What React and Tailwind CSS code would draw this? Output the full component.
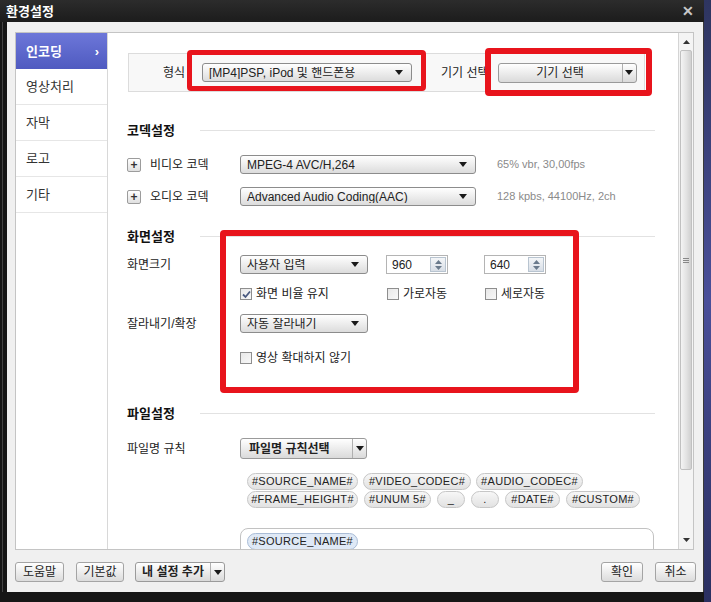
import { useState } from 'react'

const FONT = "font-['Liberation_Sans','Noto_Sans_CJK_KR',sans-serif]"

function Arrow() {
  return (
    <svg width="8" height="5" viewBox="0 0 8 5" className="flex-shrink-0">
      <path d="M0 0 H8 L4 5 Z" fill="#1a1a1a" />
    </svg>
  )
}

function Select({ w, children }) {
  return (
    <div
      className={`${w} h-[19px] flex items-center justify-between border border-[#8c8c8c] rounded-[3px] bg-gradient-to-b from-white to-[#dcdcdc] pl-[6px] pr-[8px] text-[12px] leading-none text-[#222]`}
    >
      <span className="truncate">{children}</span>
      <Arrow />
    </div>
  )
}

function SplitButton({ w, h, children, bold, center }) {
  return (
    <div
      className={`${w} ${h} flex items-stretch border border-[#9a9a9a] rounded-[3px] bg-gradient-to-b from-white to-[#dadada] text-[12px] leading-none text-[#222]`}
    >
      <div className={`flex-1 flex items-center ${center ? 'justify-center' : 'pl-[8px]'} ${bold ? 'font-bold' : ''}`}>
        {children}
      </div>
      <div className="w-[14px] border-l border-[#b0b0b0] flex items-center justify-center">
        <Arrow />
      </div>
    </div>
  )
}

function Spin({ value }) {
  return (
    <div className="w-[62px] h-[19px] flex items-center justify-between border border-[#b4b4b4] bg-white pl-[5px] pr-[1px] text-[12px] leading-none text-[#222]">
      <span>{value}</span>
      <div className="w-[16px] h-[15px] border border-[#b8c4d0] bg-gradient-to-b from-[#f4f6f8] to-[#d8dee6] flex flex-col items-center justify-center gap-[2px]">
        <svg width="7" height="4" viewBox="0 0 7 4"><path d="M0 4 H7 L3.5 0 Z" fill="#6a7a8c" /></svg>
        <svg width="7" height="4" viewBox="0 0 7 4"><path d="M0 0 H7 L3.5 4 Z" fill="#6a7a8c" /></svg>
      </div>
    </div>
  )
}

function Check({ checked, label }) {
  return (
    <div className="flex items-center gap-[4px] text-[12px] leading-none text-[#222]">
      <div className="w-[12px] h-[12px] border border-[#8e8e8e] bg-gradient-to-br from-[#e8e8e8] to-[#f8f8f8] flex items-center justify-center">
        {checked && (
          <svg width="9" height="9" viewBox="0 0 9 9">
            <path d="M1 4.5 L3.5 7 L8 1.5" stroke="#4a5a80" strokeWidth="1.8" fill="none" />
          </svg>
        )}
      </div>
      <span>{label}</span>
    </div>
  )
}

function Heading({ children }) {
  return (
    <div className="h-[20px] flex items-center">
      <span className="w-[73px] text-[13px] font-bold text-[#111] leading-none">{children}</span>
      <div className="flex-1 border-t border-[#e2e2e2]" />
    </div>
  )
}

function Tag({ w, children, blue }) {
  return (
    <div
      className={`${w} h-[17px] flex items-center justify-center rounded-full border text-[11px] leading-none tracking-[0.3px] text-[#222] ${
        blue ? 'border-[#a9bcd6] bg-[#dfe9f6]' : 'border-[#c6c6c6] bg-gradient-to-b from-[#f7f7f7] to-[#e2e2e2]'
      }`}
    >
      {children}
    </div>
  )
}

function Btn({ w, children }) {
  return (
    <div
      className={`${w} h-[20px] flex items-center justify-center border border-[#a4a4a4] rounded-[3px] bg-gradient-to-b from-white to-[#dcdcdc] text-[12px] leading-none text-[#222]`}
    >
      {children}
    </div>
  )
}

const MENU = ['인코딩', '영상처리', '자막', '로고', '기타']

const TAGS1 = [
  ['w-[111px]', '#SOURCE_NAME#'],
  ['w-[108px]', '#VIDEO_CODEC#'],
  ['w-[107px]', '#AUDIO_CODEC#'],
]
const TAGS2 = [
  ['w-[111px]', '#FRAME_HEIGHT#'],
  ['w-[67px]', '#UNUM 5#'],
  ['w-[28px]', '_'],
  ['w-[28px]', '.'],
  ['w-[55px]', '#DATE#'],
  ['w-[74px]', '#CUSTOM#'],
]

export default function App() {
  const [active, setActive] = useState(0)

  return (
    <div className={`relative w-[711px] h-[602px] overflow-hidden bg-[#161616] flex ${FONT}`}>
      {/* window */}
      <div className="w-[704px] h-full flex flex-col">
        {/* title bar */}
        <div className="h-[22px] flex items-center justify-between pl-[6px] pr-[10px] bg-gradient-to-b from-[#2c2c2c] to-[#1c1c1c]">
          <span className="text-[13px] font-bold text-white leading-none">환경설정</span>
          <span className="text-[14px] font-bold text-[#c8c8c8] leading-none">✕</span>
        </div>

        <div className="flex-1 flex pl-[2px] pb-[10px]">
          <div className="w-[5px] border-l border-[#444]" />
          {/* gray client area */}
          <div className="flex-1 bg-[#f0f0f0] flex flex-col pt-[10px] pl-[8px] pr-[9px]">
            {/* panel */}
            <div className="h-[518px] flex border border-[#c4c4c4] bg-white">
              {/* sidebar */}
              <div className="w-[92px] border-r border-[#d8d8d8] flex flex-col">
                {MENU.map((m, i) => (
                  <div
                    key={m}
                    onClick={() => setActive(i)}
                    className={`h-[36px] flex items-center justify-between pl-[10px] pr-[8px] text-[13px] leading-none cursor-pointer ${
                      active === i
                        ? 'bg-gradient-to-b from-[#6d77d9] to-[#4f5ac0] text-white font-bold'
                        : 'border-b border-[#e6e6e6] text-[#333]'
                    }`}
                  >
                    <span>{m}</span>
                    {active === i && <span className="text-[13px] font-bold">›</span>}
                  </div>
                ))}
              </div>

              {/* main */}
              <div className="flex-1 overflow-hidden pl-[19px] pt-[20px]">
                <div className="w-[528px] flex flex-col">
                  {/* format box */}
                  <div className="ml-[1px] w-[517px] h-[39px] border border-[#dcdcdc] bg-[#f8f8f8] flex items-center">
                    <span className="w-[56px] text-right text-[12px] leading-none text-[#222]">형식</span>
                    <div className="ml-[17px]">
                      <Select w="w-[210px]">[MP4]PSP, iPod 및 핸드폰용</Select>
                    </div>
                    <span className="ml-[29px] text-[12px] leading-none text-[#222]">기기 선택</span>
                    <div className="ml-[9px]">
                      <SplitButton w="w-[139px]" h="h-[20px]" center>
                        기기 선택
                      </SplitButton>
                    </div>
                  </div>

                  <div className="mt-[28px]">
                    <Heading>코덱설정</Heading>
                  </div>

                  <div className="mt-[15px] h-[19px] flex items-center">
                    <div className="w-[14px] h-[14px] border border-[#9c9c9c] rounded-[2px] bg-gradient-to-b from-white to-[#e0e0e0] flex items-center justify-center text-[12px] font-bold leading-none text-[#333]">+</div>
                    <span className="ml-[9px] w-[90px] text-[12px] leading-none text-[#222]">비디오 코덱</span>
                    <Select w="w-[236px]">MPEG-4 AVC/H,264</Select>
                    <span className="ml-[21px] text-[11px] leading-none text-[#8a8a8a]">65% vbr, 30,00fps</span>
                  </div>
                  <div className="mt-[13px] h-[19px] flex items-center">
                    <div className="w-[14px] h-[14px] border border-[#9c9c9c] rounded-[2px] bg-gradient-to-b from-white to-[#e0e0e0] flex items-center justify-center text-[12px] font-bold leading-none text-[#333]">+</div>
                    <span className="ml-[9px] w-[90px] text-[12px] leading-none text-[#222]">오디오 코덱</span>
                    <Select w="w-[236px]">Advanced Audio Coding(AAC)</Select>
                    <span className="ml-[21px] text-[11px] leading-none text-[#8a8a8a]">128 kpbs, 44100Hz, 2ch</span>
                  </div>

                  <div className="mt-[20px]">
                    <Heading>화면설정</Heading>
                  </div>

                  <div className="mt-[9px] h-[19px] flex items-center">
                    <span className="w-[113px] text-[12px] leading-none text-[#222]">화면크기</span>
                    <Select w="w-[128px]">사용자 입력</Select>
                    <div className="ml-[18px]"><Spin value="960" /></div>
                    <div className="ml-[36px]"><Spin value="640" /></div>
                  </div>
                  <div className="mt-[12px] h-[16px] flex items-center">
                    <div className="ml-[113px] w-[147px]"><Check checked label="화면 비율 유지" /></div>
                    <div className="w-[98px]"><Check label="가로자동" /></div>
                    <Check label="세로자동" />
                  </div>
                  <div className="mt-[12px] h-[19px] flex items-center">
                    <span className="w-[113px] text-[12px] leading-none text-[#222]">잘라내기/확장</span>
                    <Select w="w-[128px]">자동 잘라내기</Select>
                  </div>
                  <div className="mt-[17px] h-[16px] flex items-center">
                    <div className="ml-[113px]"><Check label="영상 확대하지 않기" /></div>
                  </div>

                  <div className="mt-[37px]">
                    <Heading>파일설정</Heading>
                  </div>

                  <div className="mt-[15px] h-[21px] flex items-center">
                    <span className="w-[113px] text-[12px] leading-none text-[#222]">파일명 규칙</span>
                    <SplitButton w="w-[127px]" h="h-[21px]" bold>
                      파일명 규칙선택
                    </SplitButton>
                  </div>

                  <div className="mt-[14px] ml-[120px] flex flex-col gap-[1px]">
                    <div className="flex gap-[5px]">
                      {TAGS1.map(([w, t]) => (
                        <Tag key={t} w={w}>{t}</Tag>
                      ))}
                    </div>
                    <div className="flex gap-[6px]">
                      {TAGS2.map(([w, t]) => (
                        <Tag key={t} w={w}>{t}</Tag>
                      ))}
                    </div>
                  </div>

                  <div className="mt-[20px] ml-[113px] w-[414px] h-[40px] border border-[#c2c2c2] rounded-t-[8px] pl-[6px] pt-[4px]">
                    <Tag w="w-[111px]" blue>#SOURCE_NAME#</Tag>
                  </div>
                </div>
              </div>

              {/* scrollbar */}
              <div className="w-[15px] border-l border-[#d4d4d4] bg-[#f4f4f4] flex flex-col">
                <div className="h-[17px] flex items-center justify-center">
                  <svg width="7" height="4" viewBox="0 0 7 4"><path d="M0 4 H7 L3.5 0 Z" fill="#333" /></svg>
                </div>
                <div className="h-[420px] mx-[1px] border border-[#c0c0c0] rounded-[2px] bg-gradient-to-r from-[#f4f4f4] via-[#e4e4e4] to-[#d0d0d0] flex flex-col items-center justify-center gap-[1px]">
                  <div className="w-[6px] border-t border-[#888]" />
                  <div className="w-[6px] border-t border-[#888]" />
                  <div className="w-[6px] border-t border-[#888]" />
                </div>
                <div className="flex-1 flex items-end justify-center pb-[7px]">
                  <svg width="7" height="4" viewBox="0 0 7 4"><path d="M0 0 H7 L3.5 4 Z" fill="#333" /></svg>
                </div>
              </div>
            </div>

            {/* bottom buttons */}
            <div className="mt-[12px] flex items-center">
              <Btn w="w-[49px]">도움말</Btn>
              <div className="ml-[12px]"><Btn w="w-[48px]">기본값</Btn></div>
              <div className="ml-[11px]">
                <SplitButton w="w-[90px]" h="h-[20px]" bold center>
                  내 설정 추가
                </SplitButton>
              </div>
              <div className="ml-auto mr-[-2px] flex gap-[12px]">
                <Btn w="w-[42px]">확인</Btn>
                <Btn w="w-[41px]">취소</Btn>
              </div>
            </div>
          </div>
          <div className="w-[1px] bg-[#3a3a3a]" />
        </div>
      </div>
      <div className="flex-1 bg-gradient-to-b from-[#2e3560] via-[#4a4f9a] to-[#2a2f60]" />

      {/* red highlight marks */}
      <div className="absolute left-[187px] top-[50px] w-[239px] h-[41px] border-[5px] border-[#e8141c] rounded-[4px]" />
      <div className="absolute left-[485px] top-[48px] w-[167px] h-[48px] border-[6px] border-[#e8141c] rounded-[4px]" />
      <div className="absolute left-[220px] top-[230px] w-[359px] h-[163px] border-[6px] border-[#e8141c] rounded-[4px]" />
    </div>
  )
}
